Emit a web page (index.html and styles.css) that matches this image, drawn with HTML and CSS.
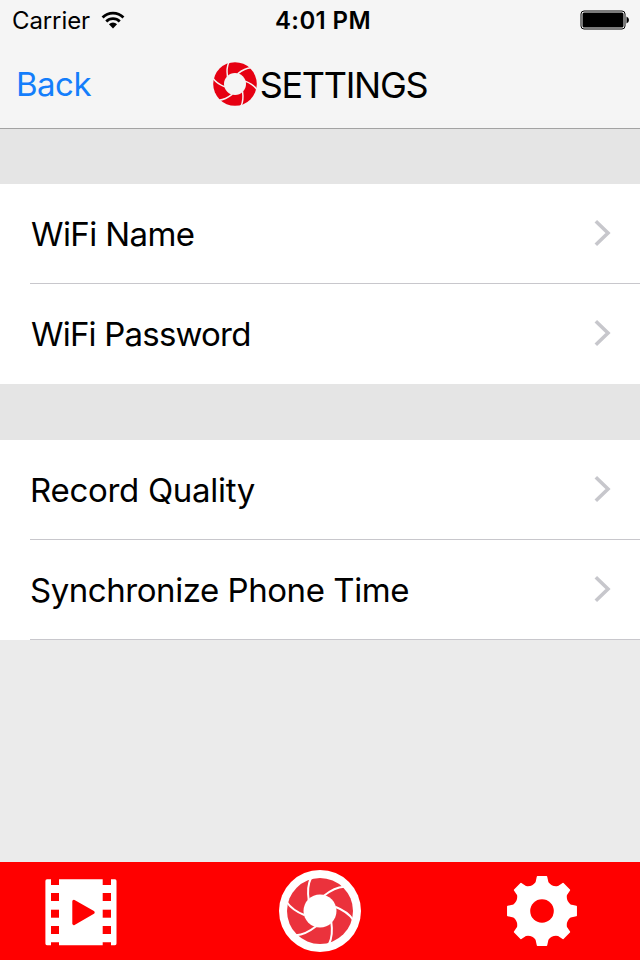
FILE: index.html
```html
<!DOCTYPE html>
<html lang="en">
<head>
    <meta charset="UTF-8">
    <meta name="viewport" content="width=device-width, initial-scale=1.0">
    <title>Settings</title>
    <link rel="stylesheet" href="styles.css">
</head>
<body>
    <!-- Shared icon shapes -->
    <svg class="defs" width="0" height="0">
        <defs>
            <path id="blade" d="M-9 -33 C-12.5 -26 -12.5 -19 -11.3 -11"/>
            <g id="blades">
                <use href="#blade"/>
                <use href="#blade" transform="rotate(60)"/>
                <use href="#blade" transform="rotate(120)"/>
                <use href="#blade" transform="rotate(180)"/>
                <use href="#blade" transform="rotate(240)"/>
                <use href="#blade" transform="rotate(300)"/>
            </g>
            <path id="chevron" d="M1.8 1.3 L14 13 L1.8 24.7"/>
        </defs>
    </svg>

    <header class="header">
        <div class="status-bar">
            <div class="carrier">
                <span class="carrier-name">Carrier</span>
                <svg class="wifi" width="24" height="19" viewBox="0 0 26 20">
                    <path class="wifi-arc" d="M1.7 6.7 A16 16 0 0 1 24.3 6.7"/>
                    <path class="wifi-arc" d="M5.7 11 A10.4 10.4 0 0 1 20.3 11"/>
                    <path d="M8.6 14 A6.2 6.2 0 0 1 17.4 14 L13 18.6 Z"/>
                </svg>
            </div>
            <span class="time">4:01 PM</span>
            <svg class="battery" width="50" height="20" viewBox="0 0 50 20">
                <rect class="battery-case" x="1" y="1" width="44" height="18" rx="3"/>
                <rect x="2.5" y="2.5" width="41" height="15" rx="1.5"/>
                <path d="M46.5 6.5 Q49 7.5 49 10 Q49 12.5 46.5 13.5 Z"/>
            </svg>
        </div>
        <div class="nav-bar">
            <a class="back" href="#">Back</a>
            <div class="title">
                <svg class="logo" width="44" height="46" viewBox="-33 -34.5 66 69">
                    <circle class="logo-disc" r="32.7"/>
                    <use class="logo-lines" href="#blades"/>
                    <circle class="logo-hole" r="16.5"/>
                </svg>
                <h1>SETTINGS</h1>
            </div>
        </div>
    </header>

    <main class="settings">
        <ul class="group">
            <li class="row">
                <span class="label name">WiFi Name</span>
                <svg class="chevron" width="17" height="26"><use href="#chevron"/></svg>
            </li>
            <li class="row last">
                <span class="label password">WiFi Password</span>
                <svg class="chevron" width="17" height="26"><use href="#chevron"/></svg>
            </li>
        </ul>
        <ul class="group">
            <li class="row">
                <span class="label quality">Record Quality</span>
                <svg class="chevron" width="17" height="26"><use href="#chevron"/></svg>
            </li>
            <li class="row">
                <span class="label sync">Synchronize Phone Time</span>
                <svg class="chevron" width="17" height="26"><use href="#chevron"/></svg>
            </li>
        </ul>
    </main>

    <nav class="tab-bar">
        <!-- Film -->
        <svg class="film" width="72" height="68" viewBox="0 0 72 68">
            <path fill="#fff" d="M2 1.3 H6 V7 H14 V1.3 H57.7 V7 H66 V1.3 H70 Q71.5 1.3 71.5 3 V65.5 Q71.5 67.3 70 67.3 H66 V64.3 H57.7 V67.3 H14 V64.3 H6 V67.3 H2 Q0.4 67.3 0.4 65.5 V3 Q0.4 1.3 2 1.3 Z"/>
            <g fill="#f00">
                <rect x="6" y="15" width="8" height="8"/>
                <rect x="6" y="31.7" width="8" height="8"/>
                <rect x="6" y="48" width="8" height="8"/>
                <rect x="57.7" y="15" width="8.3" height="8"/>
                <rect x="57.7" y="31.7" width="8.3" height="8"/>
                <rect x="57.7" y="48" width="8.3" height="8"/>
                <path class="play" d="M28.8 23.2 L48.2 34.4 L28.8 45.6 Z"/>
            </g>
        </svg>
        <!-- Camera -->
        <svg class="camera" width="82" height="82" viewBox="-41 -41 82 82">
            <circle fill="#fff" r="41"/>
            <circle fill="#eb323c" r="33"/>
            <use class="camera-lines" href="#blades"/>
            <circle fill="#fff" r="16.5"/>
        </svg>
        <!-- Gear -->
        <svg class="gear" width="72" height="72" viewBox="-36 -36 72 72">
            <path d="M-4.5 -34.2 L4.5 -34.2 L5.7 -28.5 Q9.6 -23.1 16.1 -24.2 L21 -27.4 L27.4 -21 L24.2 -16.1 Q23.1 -9.6 28.5 -5.7
                     L34.2 -4.5 L34.2 4.5 L28.5 5.7 Q23.1 9.6 24.2 16.1 L27.4 21 L21 27.4 L16.1 24.2 Q9.6 23.1 5.7 28.5
                     L4.5 34.2 L-4.5 34.2 L-5.7 28.5 Q-9.6 23.1 -16.1 24.2 L-21 27.4 L-27.4 21 L-24.2 16.1 Q-23.1 9.6 -28.5 5.7
                     L-34.2 4.5 L-34.2 -4.5 L-28.5 -5.7 Q-23.1 -9.6 -24.2 -16.1 L-27.4 -21 L-21 -27.4 L-16.1 -24.2 Q-9.6 -23.1 -5.7 -28.5 Z"/>
            <circle class="gear-hole" r="11.8"/>
        </svg>
    </nav>
</body>
</html>
```
FILE: styles.css
```css
* {
    box-sizing: border-box;
}

body {
    display: flex;
    flex-direction: column;
    width: 640px;
    height: 960px;
    margin: 0;
    background-color: #ebebeb;
    color: #000;
    font-family: Inter, "Liberation Sans", sans-serif;
}

.defs {
    display: none;
}

/* Header */
.header {
    height: 129px;
    background-color: #f5f5f5;
    border-bottom: 1px solid #a3a3a3;
}

.status-bar {
    display: grid;
    grid-template-columns: 1fr auto 1fr;
    align-items: center;
    height: 40px;
    padding: 0 10px 0 12px;
    font-size: 24px;
}

.carrier {
    display: flex;
    align-items: center;
    gap: 11px;
}

.carrier-name {
    letter-spacing: -0.1px;
}

.wifi-arc {
    fill: none;
    stroke: #000;
    stroke-width: 3;
}

.time {
    padding-left: 4px;
    font-weight: 600;
    letter-spacing: 0.4px;
}

.battery {
    justify-self: end;
}

.battery-case {
    fill: none;
    stroke: #000;
    stroke-width: 1;
}

.nav-bar {
    display: grid;
    grid-template-columns: 1fr auto 1fr;
    align-items: center;
    height: 88px;
    padding: 0 16px;
}

.back {
    color: #147efb;
    font-size: 33px;
    letter-spacing: -0.5px;
    text-decoration: none;
}

.title {
    display: flex;
    align-items: center;
    gap: 3px;
}

.title h1 {
    margin: 2px 0 0;
    font-size: 36px;
    font-weight: 400;
    letter-spacing: -1.3px;
}

.logo-disc {
    fill: #e60012;
}

.logo-lines {
    fill: none;
    stroke: #f5f5f5;
    stroke-width: 2.2;
}

.logo-hole {
    fill: #f5f5f5;
}

/* Settings list */
.settings {
    flex: 1;
}

.group {
    margin: 0;
    padding: 0;
    border-top: 56px solid #e5e5e5;
    list-style: none;
}

.group:first-child {
    border-top-width: 55px;
}

.row {
    display: flex;
    align-items: center;
    justify-content: space-between;
    height: 100px;
    padding: 0 29px 0 30px;
    background: linear-gradient(#c8c7cc, #c8c7cc) 30px 99px / 610px 1px no-repeat #fff;
}

.row.last {
    background: #fff;
}

.label {
    font-size: 33px;
    white-space: nowrap;
}

.name {
    padding-left: 1px;
    letter-spacing: -0.6px;
}

.password {
    padding-left: 1px;
    letter-spacing: -0.8px;
}

.quality {
    letter-spacing: -0.3px;
}

.sync {
    letter-spacing: -0.45px;
}

.chevron {
    margin-bottom: 2px;
    fill: none;
    stroke: #c7c7cc;
    stroke-width: 3.6;
}

/* Tab bar */
.tab-bar {
    display: flex;
    height: 98px;
    background-color: #f00;
}

.film {
    margin: 16px 0 0 45px;
}

.play {
    stroke: #f00;
    stroke-width: 3;
    stroke-linejoin: round;
}

.camera {
    margin: 8px 0 0 162px;
}

.camera-lines {
    fill: none;
    stroke: #fff;
    stroke-width: 2;
}

.gear {
    margin: 13px 0 0 145px;
    fill: #fff;
    stroke: #fff;
    stroke-width: 1.5;
    stroke-linejoin: round;
}

.gear-hole {
    fill: #f00;
    stroke: none;
}
```
